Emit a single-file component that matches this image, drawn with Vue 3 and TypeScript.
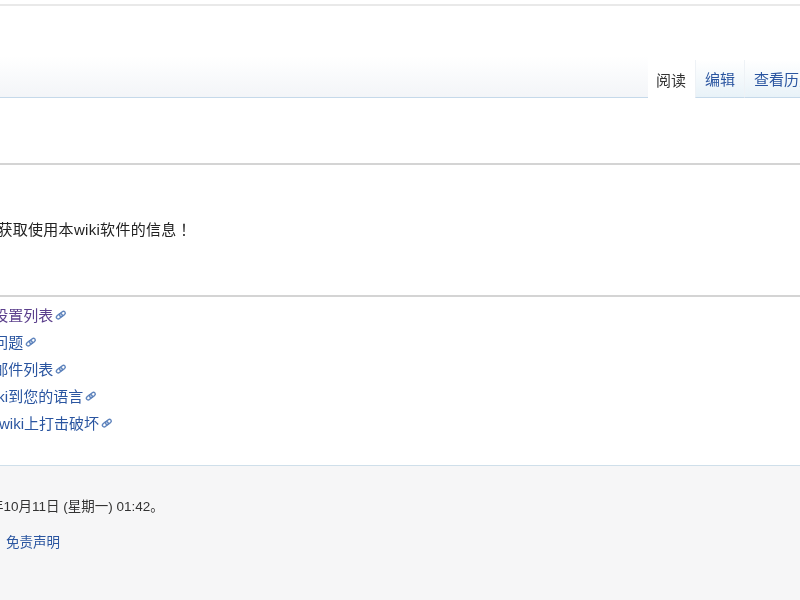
<script setup lang="ts">
const links = [
  { text: 'MediaWiki配置设置列表', visited: true },
  { text: 'MediaWiki常见问题', visited: false },
  { text: 'MediaWiki发布邮件列表', visited: false },
  { text: '本地化MediaWiki到您的语言', visited: false },
  { text: '了解如何在您的wiki上打击破坏', visited: false },
]
</script>

<template>
  <div class="page">
    <div class="top-strip"></div>
    <header class="head">
      <div class="head-fill"></div>
      <nav class="tabs">
        <span class="tab current">阅读</span>
        <span class="tab">编辑</span>
        <span class="tab">查看历史</span>
      </nav>
    </header>
    <div class="gap"></div>
    <section class="intro">
      <p class="intro-text">请查阅用户手册以获取使用本wiki软件的信息！</p>
    </section>
    <section class="list">
      <div v-for="l in links" :key="l.text" class="row">
        <span class="link" :class="{ visited: l.visited }">{{ l.text }}</span>
        <svg class="ext" viewBox="0 0 12 12" width="12" height="12" fill="none" stroke="#5f84bd" stroke-width="1.4">
          <rect x="0.8" y="4.2" width="6.4" height="3.6" rx="1.8" transform="rotate(-40 4 6) translate(-0.6 1.2)" />
          <rect x="4.8" y="4.2" width="6.4" height="3.6" rx="1.8" transform="rotate(-40 8 6) translate(0.2 -1.2)" />
        </svg>
      </div>
    </section>
    <footer class="foot">
      <p class="stamp">此页面最后编辑于2021年10月11日 (星期一) 01:42。</p>
      <p class="foot-links"><span class="foot-link">免责声明</span></p>
    </footer>
  </div>
</template>

<style>
html, body { margin: 0; background: #fff; }
</style>

<style scoped>
.page {
  width: 800px;
  height: 600px;
  overflow: hidden;
  display: flex;
  flex-direction: column;
  background: #fff;
  color: #222;
  font-family: "Liberation Sans", "Noto Sans CJK SC", sans-serif;
  font-size: 15px;
  filter: blur(0.7px);
}
.top-strip {
  height: 4px;
  flex: none;
  border-bottom: 2px solid #e9e9e9;
}
.head {
  height: 92px;
  flex: none;
  display: flex;
  align-items: stretch;
  white-space: nowrap;
}
.head-fill {
  width: 648px;
  flex: none;
  background: linear-gradient(#fff 55%, #f3f5f8);
  border-bottom: 1px solid #c5d9ea;
}
.tabs {
  display: flex;
  align-items: stretch;
  margin-top: 54px;
  flex: none;
}
.tab {
  display: flex;
  align-items: center;
  padding: 0 9px;
  color: #2a55a0;
  background: linear-gradient(#fff, #e8f2f8);
  border-bottom: 1px solid #c5d9ea;
  border-left: 1px solid #eef2f6;
}
.tab.current {
  color: #333;
  background: #fff;
  border-bottom: 0;
  border-left: 0;
  padding: 0 9px 0 8px;
}
.gap {
  height: 65px;
  flex: none;
}
.intro {
  height: 132px;
  flex: none;
  box-sizing: border-box;
  border-top: 2px solid #d4d4d4;
  display: flex;
  align-items: center;
}
.intro-text {
  margin: 0 0 4px -125px;
  white-space: nowrap;
  letter-spacing: 0.3px;
  font-family: "Liberation Sans", "Noto Sans CJK TC", sans-serif;
}
.list {
  height: 170px;
  flex: none;
  border-top: 2px solid #d4d4d4;
  padding: 4px 0 0;
  box-sizing: border-box;
  display: flex;
  flex-direction: column;
  margin-left: -106px;
}
.row {
  height: 27px;
  flex: none;
  display: flex;
  align-items: center;
  gap: 2px;
  white-space: nowrap;
}
.link { color: #2a55a0; }
.link.visited { color: #5b3f8c; }
.ext { flex: none; }
.foot {
  flex: 1;
  border-top: 1px solid #cfdfea;
  background: #f6f6f7;
  font-size: 13.5px;
  padding-top: 29px;
}
.stamp {
  margin: 0 0 0 -148px;
  white-space: nowrap;
  color: #333;
}
.foot-links {
  margin: 16px 0 0 6px;
}
.foot-link { color: #2a55a0; }
</style>
